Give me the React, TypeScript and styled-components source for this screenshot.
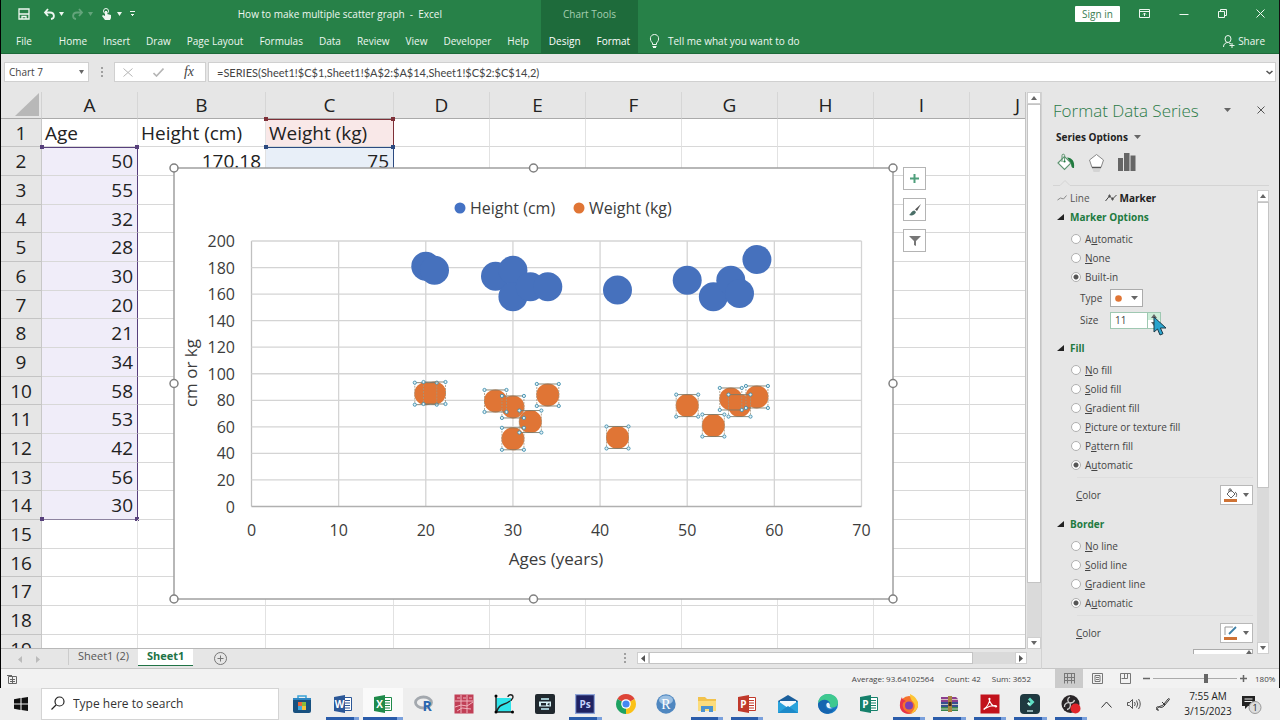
import React, { ReactNode } from "react";
import styled, { createGlobalStyle } from "styled-components";

const ui = `"Open Sans", "Noto Sans", sans-serif`;
const narrow = `Lato, "Open Sans", sans-serif`;
const green = "#278148";

const GlobalStyle = createGlobalStyle`
  * { box-sizing: border-box; }
  html, body { margin: 0; padding: 0; }
  body { font-family: ${ui}; font-size: 10px; color: #444; background: #e6e6e6; overflow: hidden; }
  button, input, select { font: inherit; color: inherit; margin: 0; }
  button { background: none; border: 0; padding: 0; }
  a { color: inherit; text-decoration: none; }
  svg { display: block; flex: none; }
`;

const Screen = styled.div`
  display: flex;
  flex-direction: column;
  height: 100vh;
`;

const AppWindow = styled.div`
  flex: 1;
  min-height: 0;
  display: flex;
  flex-direction: column;
  border-left: 1px solid #000;
  border-right: 1px solid #111;
  background: #e6e6e6;
`;

/* ---------- Title bar and ribbon ---------- */

const Ribbon = styled.header`
  display: grid;
  grid-template-columns: 540px 97px 1fr;
  grid-template-rows: 27px 26px;
  background: ${green};
  color: #eef7f0;
  border-bottom: 1px solid #1d6a39;
`;

const QuickAccess = styled.div`
  display: flex;
  align-items: center;
  padding: 0 99px 0 17px;
`;

const QuickButtons = styled.div`
  display: flex;
  align-items: center;
  gap: 8px;
`;

const IconButton = styled.button<{ $dim?: boolean }>`
  display: flex;
  align-items: center;
  gap: 4px;
  opacity: ${(p) => (p.$dim ? 0.3 : 1)};
`;

const UndoButton = styled(IconButton)`
  margin-left: 5px;
`;

const DocTitle = styled.div`
  margin-left: auto;
  font-size: 10px;
  white-space: pre;
`;

const ContextTitle = styled.div`
  display: flex;
  align-items: center;
  justify-content: center;
  background: #1e6b3b;
  color: #a5cfb2;
  font-size: 10px;
`;

const WindowControls = styled.div`
  display: flex;
  align-items: center;
  justify-content: flex-end;
  gap: 29px;
  padding-right: 14px;
`;

const SignIn = styled.button`
  width: 45px;
  height: 16px;
  margin-right: -10px;
  border-radius: 1px;
  background: #fff;
  color: #3b7d52;
  font-size: 10px;
`;

const Tabs = styled.nav`
  display: flex;
  align-items: center;
  padding: 2px 0 0 15px;
  gap: 16px;
`;

const Tab = styled.button<{ $wide?: boolean }>`
  font-size: 10px;
  white-space: nowrap;
  margin-right: ${(p) => (p.$wide ? "11px" : "0")};
`;

const ContextTabs = styled.nav`
  display: flex;
  align-items: center;
  justify-content: center;
  gap: 16px;
  padding-top: 2px;
  background: #1e6b3b;
  color: #fff;
`;

const RibbonEnd = styled.div`
  display: flex;
  align-items: center;
  justify-content: space-between;
  padding: 2px 14px 0 11px;
`;

const IconLabel = styled.button`
  display: flex;
  align-items: center;
  gap: 8px;
  white-space: nowrap;
`;

const ShareLabel = styled(IconLabel)`
  gap: 3px;
`;

/* ---------- Formula bar ---------- */

const FormulaBar = styled.div`
  display: flex;
  align-items: center;
  height: 38px;
  padding: 0 3px 2px;
`;

const Box = styled.div`
  display: flex;
  align-items: center;
  height: 20px;
  background: #fff;
  border: 1px solid #d0d0d0;
`;

const NameBox = styled(Box)`
  width: 85px;
  padding: 0 4px;
`;

const BareInput = styled.input`
  flex: 1;
  min-width: 0;
  width: 0;
  border: 0;
  outline: 0;
  padding: 0;
  background: transparent;
`;

const FormulaInput = styled(BareInput)`
  font-family: ${narrow};
  font-size: 11px;
`;

const Grip = styled.span<{ $flush?: boolean }>`
  width: 2px;
  height: 11px;
  margin: 0 11px 0 ${(p) => (p.$flush ? "0" : "12px")};
  background: repeating-linear-gradient(#a0a0a0 0 2px, transparent 2px 4px);
`;

const FormulaButtons = styled(Box)`
  width: 92px;
  justify-content: space-between;
  padding: 0 11px 0 8px;
  margin-right: 2px;
`;

const FxLabel = styled.span`
  font: italic 14px "Liberation Serif", serif;
  color: #444;
`;

const FormulaBox = styled(Box)`
  flex: 1;
  padding: 0 2px 0 8px;
`;

/* ---------- Worksheet ---------- */

const Main = styled.main`
  flex: 1;
  min-height: 0;
  display: grid;
  grid-template-columns: 1fr 237px;
`;

const SheetColumn = styled.section`
  display: grid;
  grid-template-columns: 1fr 14px;
  grid-template-rows: 1fr 20px;
  min-height: 0;
  min-width: 0;
  border-right: 1px solid #d2d2d2;
`;

const SheetView = styled.div`
  position: relative;
  overflow: hidden;
  margin-right: 1px;
  border-right: 1px solid #c4c4c4;
  border-bottom: 1px solid #b8b8b8;
  background: #fff;
`;

const Table = styled.table`
  table-layout: fixed;
  width: 1065px;
  border-collapse: separate;
  border-spacing: 0;
  font-size: 19px;
  line-height: 27px;
  color: #222;
`;

const Corner = styled.th`
  position: relative;
  height: 27px;
  padding: 0 2px 2px 14px;
  background: #e6e6e6;
  border-right: 1px solid #d2d2d2;
  border-bottom: 1px solid #aaa;
`;

const ColumnHead = styled.th`
  height: 27px;
  padding: 0;
  font-weight: 400;
  line-height: 24px;
  background: #e6e6e6;
  border-right: 1px solid #d6d6d6;
  border-bottom: 1px solid #aaa;
`;

const Row = styled.tr`
  height: 29px;
  &:nth-child(3n + 1) { height: 28px; }
`;

const RowHead = styled.th`
  padding: 0;
  font-weight: 400;
  line-height: 26px;
  background: #e6e6e6;
  border-right: 1px solid #c8c8c8;
  border-bottom: 1px solid #c4c4c4;
`;

type Mark = "category" | "name" | "value" | undefined;

const cellFill = { category: "#f0edf9", name: "#f9e8e8", value: "#e8eff8" };
const cellEdge = { category: "#57407c", name: "#7e3038", value: "#2c4a80" };

const Cell = styled.td<{ $mark?: Mark; $num?: boolean; $first?: boolean; $last?: boolean }>`
  position: relative;
  padding: 0 4px 0 3px;
  line-height: 26px;
  white-space: nowrap;
  text-align: ${(p) => (p.$num ? "right" : "left")};
  border-right: 1px solid ${(p) => (p.$mark ? cellEdge[p.$mark] : "#e2e2e2")};
  border-bottom: 1px solid ${(p) => (p.$last ? "#8d83a0" : "#d8d8d8")};
  background: ${(p) => (p.$mark ? cellFill[p.$mark] : "transparent")};
  box-shadow: ${(p) => (p.$first && p.$mark ? `inset 0 1px ${cellEdge[p.$mark]}` : "none")};
`;

const Handle = styled.i<{ $color: string; $right?: boolean; $bottom?: boolean }>`
  position: absolute;
  width: 4px;
  height: 4px;
  background: ${(p) => p.$color};
  ${(p) => (p.$right ? "right: -2px;" : "left: -2px;")}
  ${(p) => (p.$bottom ? "bottom: -2px;" : "top: -2px;")}
`;

const ChartFrame = styled.figure`
  position: absolute;
  left: 167px;
  top: 70px;
  margin: 0;
`;

const ChartButtons = styled.div`
  position: absolute;
  left: 902px;
  top: 75px;
  display: grid;
  gap: 8px;
`;

const ChartButton = styled.button`
  display: flex;
  align-items: center;
  justify-content: center;
  width: 23px;
  height: 23px;
  background: #fff;
  border: 1px solid #b4b4b4;
`;

const ScrollBar = styled.div`
  display: flex;
  flex-direction: column;
  align-items: stretch;
  background: #dadada;
`;

const ScrollEnd = styled.button`
  display: flex;
  align-items: center;
  justify-content: center;
  min-width: 12px;
  height: 12px;
  background: #fff;
  border: 1px solid #cfcfcf;
`;

const Thumb = styled.div<{ $share: number }>`
  flex: ${(p) => p.$share};
  background: #fff;
  border: 1px solid #c4c4c4;
`;

const Rest = styled.div<{ $share: number }>`
  flex: ${(p) => p.$share};
`;

const SheetTabs = styled.footer`
  grid-column: 1 / -1;
  display: flex;
  align-items: flex-start;
  border-bottom: 1px solid #c6c6c6;
  font-size: 11px;
`;

const TabArrows = styled.div`
  display: flex;
  gap: 14px;
  width: 68px;
  height: 16px;
  padding: 7px 0 0 17px;
  border-right: 1px solid #cccccc;
`;

const SheetTab = styled.button<{ $active?: boolean }>`
  height: 17px;
  padding: 0 9px 2px;
  line-height: 14px;
  font-weight: ${(p) => (p.$active ? 700 : 400)};
  color: ${(p) => (p.$active ? "#217346" : "#555")};
  background: ${(p) => (p.$active ? "#fff" : "transparent")};
  border-bottom: 1px solid ${(p) => (p.$active ? "#217346" : "transparent")};
`;

const AddSheet = styled.button`
  margin: 3px 0 0 21px;
`;

const HScroll = styled.div`
  display: flex;
  align-items: center;
  width: 417px;
  height: 18px;
  margin-left: auto;
  padding-right: 14px;
`;

const HTrack = styled.div`
  flex: 1;
  display: flex;
  height: 12px;
  background: #dadada;
`;

/* ---------- Format pane ---------- */

const Pane = styled.aside`
  position: relative;
  display: flex;
  flex-direction: column;
  min-height: 0;
  padding: 0 10px 14px 11px;
  border-bottom: 1px solid #c6c6c6;
`;

const PaneTitle = styled.div`
  display: flex;
  align-items: center;
  height: 36px;
`;

const PaneHeading = styled.h2`
  flex: 1;
  margin: 0;
  font-size: 17px;
  font-weight: 300;
  white-space: nowrap;
  color: #2b7a46;
`;

const PaneTools = styled.div`
  display: flex;
  align-items: center;
  gap: 26px;
  padding-right: 4px;
`;

const SeriesOptions = styled.button`
  display: flex;
  align-items: center;
  gap: 6px;
  height: 18px;
  padding-left: 3px;
  font-weight: 700;
  color: #222;
`;

const PaneIcons = styled.div`
  display: flex;
  align-items: center;
  gap: 13px;
  height: 32px;
  padding-left: 4px;
`;

const Divider = styled.div`
  height: 1px;
  background: #d9d9d9;
`;

const PaneBody = styled.div`
  flex: 1;
  min-height: 0;
  display: flex;
  margin-top: 4px;
`;

const PaneScroll = styled.div`
  flex: 1;
  min-width: 0;
  overflow: hidden;
  padding: 0 4px;
`;

const LineTabs = styled.div`
  display: flex;
  align-items: center;
  gap: 15px;
  height: 16px;
  padding-bottom: 1px;
`;

const LineTab = styled.button<{ $active?: boolean }>`
  display: flex;
  align-items: center;
  gap: 3px;
  font-weight: ${(p) => (p.$active ? 700 : 400)};
  color: ${(p) => (p.$active ? "#222" : "#555")};
`;

const SectionHeading = styled.h3`
  display: flex;
  align-items: center;
  gap: 6px;
  height: 21px;
  margin: 0;
  font-size: 10px;
  font-weight: 700;
  color: #217a3f;
`;

const Section = styled.section`
  margin-bottom: 7px;
`;

const RadioRow = styled.label`
  display: flex;
  align-items: center;
  gap: 4px;
  height: 19px;
  padding-left: 14px;
  white-space: nowrap;
  &:first-of-type { margin-top: 2px; }
`;

const Radio = styled.input`
  appearance: none;
  width: 10px;
  height: 10px;
  border: 1px solid #b0b0b0;
  border-radius: 50%;
  background: #fff;
  &:checked { background: radial-gradient(circle, #555 0 2px, #fff 3px); }
`;

const SubRow = styled.div`
  display: flex;
  align-items: center;
  height: 22px;
  padding: 2px 0 0 23px;
  label { width: 30px; }
`;

const TypePicker = styled.button`
  display: flex;
  align-items: center;
  justify-content: space-between;
  width: 33px;
  height: 18px;
  padding: 0 4px;
  background: #fff;
  border: 1px solid #ababab;
`;

const Spinner = styled.div`
  display: flex;
  width: 51px;
  height: 17px;
  padding-left: 4px;
  background: #fff;
  border: 1px solid #9fc8b2;
`;

const SpinButtons = styled.div`
  display: grid;
  width: 13px;
  border-left: 1px solid #9fc8b2;
`;

const SpinButton = styled.button<{ $hot?: boolean }>`
  display: flex;
  align-items: center;
  justify-content: center;
  background: ${(p) => (p.$hot ? "#cdeed9" : "#fff")};
`;

const ColorRow = styled.div`
  display: flex;
  align-items: center;
  justify-content: space-between;
  height: 22px;
  margin-top: 6px;
  padding-left: 19px;
`;

const ColorButton = styled.button`
  display: flex;
  align-items: center;
  justify-content: center;
  gap: 5px;
  width: 33px;
  height: 20px;
  background: #fff;
  border: 1px solid #b8b8b8;
`;

const RowRule = styled(Divider)`
  margin: 3px 0 0 20px;
  background: #dedede;
`;

const TransparencyRow = styled(ColorRow)`
  margin-top: 4px;
  height: 19px;
`;

const PercentBox = styled(Spinner)`
  width: 60px;
  border-color: #ababab;
  justify-content: space-between;
`;

const Cursor = styled.svg`
  position: absolute;
  left: 111px;
  top: 224px;
`;

/* ---------- Status bar ---------- */

const StatusBar = styled.div`
  display: flex;
  align-items: center;
  height: 19px;
  padding: 0 4px 0 6px;
  background: #f2f2f2;
  font-size: 8px;
`;

const Stats = styled.div`
  display: flex;
  gap: 11px;
  margin: 0 24px 0 auto;
`;

const ViewButton = styled.button<{ $active?: boolean }>`
  display: flex;
  align-items: center;
  justify-content: center;
  width: 28px;
  height: 19px;
  background: ${(p) => (p.$active ? "#cbcbcb" : "transparent")};
`;

const Zoom = styled.div`
  display: flex;
  align-items: center;
  gap: 3px;
  margin-left: 4px;
`;

const ZoomRange = styled.input`
  appearance: none;
  width: 84px;
  height: 10px;
  background: linear-gradient(#aaa, #aaa) center / 100% 1px no-repeat;
  &::-webkit-slider-thumb {
    appearance: none;
    width: 4px;
    height: 9px;
    background: #666;
  }
`;

const ZoomValue = styled.span`
  width: 20px;
  margin-left: 5px;
`;

/* ---------- Taskbar ---------- */

const Taskbar = styled.footer`
  display: flex;
  align-items: stretch;
  height: 32px;
  background: #eeeeee;
  color: #222;
`;

const Start = styled.button`
  display: flex;
  align-items: center;
  justify-content: center;
  width: 41px;
`;

const Search = styled.label`
  display: flex;
  align-items: center;
  gap: 8px;
  width: 238px;
  padding: 0 0 2px 9px;
  background: #fff;
  border: 1px solid #d4d4d4;
  font-size: 12px;
  input::placeholder { color: #333; opacity: 1; }
`;

const Apps = styled.div`
  flex: 1;
  display: grid;
  grid-template-columns: repeat(20, 1fr);
  margin: 0 10px 0 3px;
`;

const AppButton = styled.button<{ $open?: boolean; $active?: boolean }>`
  position: relative;
  display: flex;
  align-items: center;
  justify-content: center;
  background: ${(p) => (p.$active ? "#fafafa" : "transparent")};
  &::after {
    content: "";
    display: ${(p) => (p.$open ? "block" : "none")};
    position: absolute;
    left: ${(p) => (p.$active ? "0" : "4px")};
    right: ${(p) => (p.$active ? "0" : "4px")};
    bottom: 0;
    height: 3px;
    background: linear-gradient(90deg, #2a5caa 84%, #7aa0dc 84%);
  }
`;

const Tray = styled.div`
  display: flex;
  align-items: center;
  gap: 15px;
  padding-right: 18px;
`;

const Clock = styled.time`
  width: 54px;
  margin: 0 -8px 0 -4px;
  font-size: 10px;
  line-height: 15px;
  text-align: center;
  white-space: nowrap;
`;

/* ---------- Small icons ---------- */

const Caret = ({ up, color = "#666", size = 7 }: { up?: boolean; color?: string; size?: number }) => (
  <svg width={size} height="4" viewBox="0 0 8 4" preserveAspectRatio="none">
    <path d={up ? "M0 4 4 0 8 4z" : "M0 0h8L4 4z"} fill={color} />
  </svg>
);

const SideCaret = ({ left, color = "#555" }: { left?: boolean; color?: string }) => (
  <svg width="4" height="7" viewBox="0 0 4 7">
    <path d={left ? "M4 0v7L0 3.500z" : "M0 0v7l4-3.500z"} fill={color} />
  </svg>
);

const Stroke = ({ w, h, d, color = "#eef7f0", sw = 1 }: { w: number; h: number; d: string; color?: string; sw?: number }) => (
  <svg width={w} height={h} viewBox={`0 0 ${w} ${h}`} fill="none" stroke={color} strokeWidth={sw}>
    <path d={d} />
  </svg>
);

const BucketIcon = () => (
  <svg width="18" height="19" viewBox="0 0 18 19">
    <path d="M1 10 7.500 3.500 14 10l-6.500 6.500z" fill="#fff" stroke="#5d9470" strokeWidth="1.100" />
    <path d="M5 9V2.500a1.300 1.300 0 0 1 2.600 0V8" fill="none" stroke="#5d9470" />
    <path d="M10 4.500c5 .5 8 3.500 7 10.500-2 .500-3-1.500-3-5z" fill="#217a3f" />
    <circle cx="7.500" cy="8.500" r="1.100" fill="#217a3f" />
  </svg>
);

const PentagonIcon = () => (
  <svg width="17" height="19" viewBox="0 0 17 19">
    <path d="M8.500 1.500 15.500 7 13 14.500H4L1.500 7z" fill="#fff" stroke="#888" />
    <path d="M4 14.500h9" stroke="#555" strokeWidth="1.500" />
    <path d="M4.500 16h8l-1 3h-6z" fill="#d4d4d4" />
  </svg>
);

const ColumnsIcon = () => (
  <svg width="18" height="18" viewBox="0 0 18 18" fill="#666">
    <path d="M0 5h5v13H0zM6 0h5.500v18H6zM12.500 2.500h5V18h-5z" />
  </svg>
);

/* ---------- Chart ---------- */

const heights: [number, number][] = [
  [20, 181], [21, 178], [28, 173.5], [30, 178], [30, 158], [32, 165.5], [34, 165.5],
  [42, 163], [50, 170.5], [53, 158], [55, 170.5], [56, 160.5], [58, 186],
];
const weights: [number, number][] = [
  [20, 85], [21, 85.5], [28, 79.5], [30, 75], [30, 51], [32, 64], [34, 84],
  [42, 52], [50, 76], [53, 61], [55, 81], [56, 76], [58, 82.5],
];

const plot = { left: 83.5, top: 79, width: 610, height: 265.500 };
const px = (v: number) => plot.left + (v / 70) * plot.width;
const py = (v: number) => plot.top + plot.height - (v / 200) * plot.height;
const xTicks = [0, 10, 20, 30, 40, 50, 60, 70];
const yTicks = [0, 20, 40, 60, 80, 100, 120, 140, 160, 180, 200];

const ScatterChart = () => (
  <svg width="732" height="444" viewBox="0 0 732 444" fontFamily='"Open Sans", sans-serif' fontSize="16" fill="#3c3c3c">
    <rect x="6" y="6" width="719" height="431" fill="#fff" stroke="#a0a0a0" strokeWidth="1.500" />
    {xTicks.map((t) => (
      <g key={t}>
        <path d={`M${px(t)} ${plot.top}V${plot.top + plot.height}`} stroke={t ? "#d4d4d4" : "#c0c0c0"} strokeWidth="1.300" />
        <text x={px(t)} y="374" textAnchor="middle">{t}</text>
      </g>
    ))}
    {yTicks.map((t) => (
      <g key={t}>
        <path d={`M${plot.left} ${py(t)}H${plot.left + plot.width}`} stroke={t ? "#d4d4d4" : "#b0b0b0"} strokeWidth="1.300" />
        <text x="67" y={py(t) + 6} textAnchor="end">{t}</text>
      </g>
    ))}
    <circle cx="292" cy="46" r="5.500" fill="#4472c4" />
    <text x="302" y="52">Height (cm)</text>
    <circle cx="411" cy="46" r="5.500" fill="#e07535" />
    <text x="421" y="52">Weight (kg)</text>
    <text x="388" y="403" textAnchor="middle" fontSize="17">Ages (years)</text>
    <text transform="translate(29 211) rotate(-90)" textAnchor="middle" fontSize="17">cm or kg</text>
    {heights.map(([x, y], i) => (
      <circle key={i} cx={px(x)} cy={py(y)} r="14.500" fill="#4671bd" />
    ))}
    {weights.map(([x, y], i) => (
      <circle key={i} cx={px(x)} cy={py(y)} r="11.500" fill="#e07535" />
    ))}
    {weights.map(([x, y], i) => (
      <g key={i} transform={`translate(${px(x)} ${py(y)})`} fill="#e4f2f8" stroke="#3f8fae" strokeWidth="0.900">
        <path d="M-11-11H11M-11 11H11" stroke="#7d7a6a" strokeWidth="0.900" />
        <path d="M-11-11V11M11-11V11" stroke="#a3947c" strokeWidth="0.800" strokeDasharray="2 1" />
        <circle cx="-11" cy="-11" r="1.600" />
        <circle cx="11" cy="-11" r="1.600" />
        <circle cx="-11" cy="11" r="1.600" />
        <circle cx="11" cy="11" r="1.600" />
      </g>
    ))}
    {[6, 365.5, 725].flatMap((x) =>
      [6, 221.5, 437].filter((y) => !(x === 365.5 && y === 221.5)).map((y) => (
        <circle key={`${x}-${y}`} cx={x} cy={y} r="4" fill="#fff" stroke="#808080" strokeWidth="1.500" />
      ))
    )}
  </svg>
);

/* ---------- Worksheet data ---------- */

const columns = ["A", "B", "C", "D", "E", "F", "G", "H", "I", "J"];
const colWidths = [96, 128, 128, 96, 96, 96, 96, 96, 96, 96];
const ages = [50, 55, 32, 28, 30, 20, 21, 34, 58, 53, 42, 56, 30];

const cellText = (row: number, col: number): string => {
  if (row === 1) return ["Age", "Height (cm)", "Weight (kg)"][col] ?? "";
  if (col === 0) return String(ages[row - 2] ?? "");
  if (row === 2) return ["", "170.18", "75"][col] ?? "";
  return "";
};

const cellMark = (row: number, col: number): Mark => {
  if (col === 0 && row > 1 && row < 15) return "category";
  if (col === 2 && row === 1) return "name";
  if (col === 2 && row > 1 && row < 15) return "value";
  return undefined;
};

const Worksheet = () => (
  <Table>
    <colgroup>
      <col style={{ width: 41 }} />
      {colWidths.map((w, i) => <col key={i} style={{ width: w }} />)}
    </colgroup>
    <thead>
      <tr>
        <Corner>
          <svg width="24" height="23" viewBox="0 0 24 23"><path d="M24 0v23H0z" fill="#b8b8b8" /></svg>
        </Corner>
        {columns.map((c) => <ColumnHead key={c} scope="col">{c}</ColumnHead>)}
      </tr>
    </thead>
    <tbody>
      {Array.from({ length: 19 }, (_, i) => i + 1).map((r) => (
        <Row key={r}>
          <RowHead scope="row">{r}</RowHead>
          {columns.map((c, i) => {
            const mark = cellMark(r, i);
            return (
              <Cell key={c} $mark={mark} $num={r > 1} $first={r <= 2} $last={r === 14 && i === 0}>
                {cellText(r, i)}
                {mark && r <= 2 && (
                  <>
                    <Handle $color={cellEdge[mark]} />
                    <Handle $color={cellEdge[mark]} $right />
                  </>
                )}
                {mark === "category" && r === 14 && (
                  <>
                    <Handle $color={cellEdge[mark]} $bottom />
                    <Handle $color={cellEdge[mark]} $bottom $right />
                  </>
                )}
              </Cell>
            );
          })}
        </Row>
      ))}
    </tbody>
  </Table>
);

/* ---------- Taskbar icons ---------- */

const Glyph = ({ children }: { children: ReactNode }) => (
  <svg width="20" height="20" viewBox="0 0 20 20">{children}</svg>
);

const Letter = ({ x = 6, y = 14, size = 10, color = "#fff", children }: { x?: number; y?: number; size?: number; color?: string; children: string }) => (
  <text x={x} y={y} fontSize={size} fontWeight="700" fill={color} textAnchor="middle" fontFamily='"Open Sans", sans-serif'>{children}</text>
);

const OfficeGlyph = ({ letter, color }: { letter: string; color: string }) => (
  <Glyph>
    <path d="M10 3.500h8.500v13H10z" fill="#fff" stroke={color} />
    <path d="M12 6.500h5M12 9h5M12 11.500h5M12 14h5" stroke={color} strokeWidth="1.200" />
    <path d="M1 3l11-2v18L1 17z" fill={color} />
    <Letter x={6.5} y={13.5}>{letter}</Letter>
  </Glyph>
);

const apps: { name: string; open?: boolean; active?: boolean; icon: ReactNode }[] = [
  {
    name: "Store",
    icon: (
      <Glyph>
        <path d="M6 4V2h8v2" fill="none" stroke="#38a3d8" strokeWidth="1.500" />
        <path d="M1 4h18v13a2 2 0 0 1-2 2H3a2 2 0 0 1-2-2z" fill="#17507f" />
        <path d="M1 4h18v2H1z" fill="#2d86c2" />
        <path d="M6 8h4v4H6z" fill="#e8653a" /><path d="M10 8h4v4h-4z" fill="#86bc3c" />
        <path d="M6 12h4v4H6z" fill="#3ca8e0" /><path d="M10 12h4v4h-4z" fill="#f3c13a" />
      </Glyph>
    ),
  },
  { name: "Word", open: true, icon: <OfficeGlyph letter="W" color="#2b5797" /> },
  { name: "Excel", open: true, active: true, icon: <OfficeGlyph letter="X" color="#1f8a4a" /> },
  {
    name: "R",
    icon: (
      <Glyph>
        <ellipse cx="9.500" cy="8.500" rx="8" ry="5.500" fill="none" stroke="#a3a8ae" strokeWidth="2.800" />
        <Letter x={13} y={17} size={14} color="#2a66b0">R</Letter>
      </Glyph>
    ),
  },
  {
    name: "Charts",
    icon: (
      <Glyph>
        <rect width="19" height="19" x=".500" y=".500" fill="#c13f56" />
        <path d="M1 7h18M7 1v18M13 1v18M1 13l6-2 6 1 6-4M3 4h3M9 4h3M15 4h3M3 17l5-3 9 1" stroke="#efb3bd" fill="none" />
      </Glyph>
    ),
  },
  {
    name: "Curve",
    icon: (
      <Glyph>
        <path d="M2 4h15v14H2z" fill="#2fe3ea" />
        <path d="M2 1v17h17M3 17C6 9 9 12 16 7" fill="none" stroke="#222" strokeWidth="1.400" />
        <path d="M14 3c0-3 5-3 5 0 0 2-2 2-2 4" fill="none" stroke="#222" strokeWidth="1.400" />
        <circle cx="2" cy="18" r="1.500" /><circle cx="18.500" cy="18" r="1.500" /><circle cx="2" cy="2" r="1.500" />
      </Glyph>
    ),
  },
  {
    name: "Recorder",
    icon: (
      <Glyph>
        <rect width="20" height="20" rx="2" fill="#20282e" />
        <path d="M6 4h8v2H6zM6 14h8v2H6z" fill="#9fc3cb" />
        <path d="M4 7.500h12v5H4z" fill="#d6f0f5" />
        <path d="M6 9h5v2.500H6zM12 10.300l2.500-1.500v3z" fill="#20282e" />
      </Glyph>
    ),
  },
  {
    name: "Photoshop",
    open: true,
    icon: (
      <Glyph>
        <rect x=".500" y=".500" width="19" height="19" fill="#1e2262" stroke="#8fa5d8" strokeWidth="1.500" />
        <Letter x={10} y={13.5} size={10} color="#c5d4fb">Ps</Letter>
      </Glyph>
    ),
  },
  {
    name: "Chrome",
    icon: (
      <Glyph>
        <path d="M10 10 1.340 5A10 10 0 0 1 18.660 5z" fill="#dd4437" />
        <path d="M10 10 18.660 5A10 10 0 0 1 10 20z" fill="#fbc116" />
        <path d="M10 10 10 20A10 10 0 0 1 1.340 5z" fill="#1da261" />
        <circle cx="10" cy="10" r="4.800" fill="#fff" /><circle cx="10" cy="10" r="3.600" fill="#4587f2" />
      </Glyph>
    ),
  },
  {
    name: "RStudio",
    icon: (
      <Glyph>
        <circle cx="10" cy="10" r="9.700" fill="#4f87c0" />
        <ellipse cx="10" cy="6" rx="7" ry="4.500" fill="#9cc0e2" />
        <text x="10" y="15" fontSize="14" fill="#fff" textAnchor="middle" fontFamily='"Liberation Serif", serif'>R</text>
      </Glyph>
    ),
  },
  {
    name: "Explorer",
    open: true,
    icon: (
      <Glyph>
        <path d="M1 3h7l2 2h9v12H1z" fill="#f2c24c" /><path d="M1 7h18v10H1z" fill="#fbdc7c" />
        <path d="M4 18v-6h12v6h-4v-3H8v3z" fill="#4b93cf" />
      </Glyph>
    ),
  },
  { name: "PowerPoint", open: true, icon: <OfficeGlyph letter="P" color="#c0392b" /> },
  {
    name: "Mail",
    icon: (
      <Glyph>
        <path d="M0 7 10 1l10 6v12H0z" fill="#1b5f9c" /><path d="M2 7h16v6H2z" fill="#f4f9fc" />
        <path d="M0 7l10 7 10-7v12H0z" fill="#2aa3dc" /><path d="M0 19 10 12l10 7z" fill="#1c8ac9" />
      </Glyph>
    ),
  },
  {
    name: "Edge",
    icon: (
      <Glyph>
        <circle cx="10" cy="10" r="10" fill="#1877c4" />
        <path d="M0 9C1 2 6 0 10 0c6 0 10 4 10 8.500 0 3-2.500 5-5.500 5-2.500 0-3.500-1-2.500-2.500C13 8 10 6 7 6.500 3 7 1 8 0 9z" fill="#3fc98f" />
        <path d="M0 10C2 5 10 4 11 9c-2-1-4 1-3.500 3.500C8 16 12 17 16 15c-2 4-6 5-9 4.600C3 18.500 0 15 0 10z" fill="#1565b0" />
        <path d="M11 9c-2-1-3 1-2.500 3 .500 2 3 3 6.500 2-3 0-4-1.500-3-3z" fill="#eaf5fb" />
      </Glyph>
    ),
  },
  { name: "Publisher", icon: <OfficeGlyph letter="P" color="#15806b" /> },
  {
    name: "Firefox",
    open: true,
    icon: (
      <Glyph>
        <circle cx="10" cy="11" r="9" fill="#f5722c" />
        <path d="M11 0c5 2 9 7 8 12-1 4-4 7-8 8 5-4 6-9 3-12C12 6 11 4 11 0z" fill="#fdc534" />
        <path d="M3 3c0 3 3 3 4 4-3 1-4 3-3 6 1 4 5 6 9 6-8 3-13-3-12-9 0-3 1-5 2-7z" fill="#e8334a" />
        <circle cx="10" cy="11.500" r="4" fill="#7b3fb5" />
      </Glyph>
    ),
  },
  {
    name: "WinRAR",
    open: true,
    icon: (
      <Glyph>
        <path d="M2 3h15l2 2v3H2z" fill="#8d3f8e" /><path d="M2 8h17v5H2z" fill="#38508e" /><path d="M2 13h17v4H2z" fill="#37864c" />
        <path d="M2 5.500h17M2 10.500h17M2 15h17" stroke="#e8e0d0" strokeWidth=".800" />
        <path d="M9 2h4v16H9z" fill="#a8843f" /><path d="M9.500 8h3v4h-3z" fill="#3e2e1a" />
      </Glyph>
    ),
  },
  {
    name: "Acrobat",
    open: true,
    icon: (
      <Glyph>
        <rect width="19" height="19" x=".500" y=".500" fill="#c2121c" />
        <path d="M4 15c3-2 5-5 6-10 0-1-1.500-1-1 0 1 4 3 7 7 8 1 0 1-1.500-1-1.500-4 0-7 1-10 3-1 1-1 1-1 .500z" fill="none" stroke="#fff" strokeWidth="1.100" />
      </Glyph>
    ),
  },
  {
    name: "Filmora",
    open: true,
    icon: (
      <Glyph>
        <rect width="20" height="20" rx="4" fill="#1f3940" />
        <path d="M10 3.500 14.500 8 10 12.500 8 10.500 10.500 8 8 5.500z" fill="#5fe0c4" />
        <path d="M7 9.500 8.500 8l2 2-1.500 1.500z" fill="#c9fff2" />
        <path d="M7 17h6" stroke="#dff" strokeWidth="1.200" />
      </Glyph>
    ),
  },
  {
    name: "OBS",
    open: true,
    icon: (
      <Glyph>
        <circle cx="9.500" cy="10" r="9" fill="#2a2628" />
        <path d="M9 3c-3 1-3 5 0 6 2 0 4-1 4.500-3M9 9c-3-1-6 1-5.500 4M9 9c1 3 0 6-3 6.500" fill="none" stroke="#cfcfcf" strokeWidth="1.300" />
        <circle cx="14.500" cy="14.500" r="5" fill="#e0252b" />
      </Glyph>
    ),
  },
];

/* ---------- Pane parts ---------- */

const fillOptions = [["", "N", "o fill"], ["", "S", "olid fill"], ["", "G", "radient fill"], ["", "P", "icture or texture fill"], ["P", "a", "ttern fill"], ["A", "u", "tomatic"]];
const borderOptions = [["", "N", "o line"], ["", "S", "olid line"], ["", "G", "radient line"], ["A", "u", "tomatic"]];
const markerOptions = [["A", "u", "tomatic"], ["", "N", "one"], ["Built-in", "", ""]];

const Radios = ({ name, options, chosen }: { name: string; options: string[][]; chosen: number }) => (
  <>
    {options.map(([a, u, b], i) => (
      <RadioRow key={i}>
        <Radio type="radio" name={name} defaultChecked={i === chosen} />
        <span>{a}{u && <u>{u}</u>}{b}</span>
      </RadioRow>
    ))}
  </>
);

const Heading = ({ children }: { children: string }) => (
  <SectionHeading>
    <svg width="7" height="6" viewBox="0 0 7 6"><path d="M7 0v6H0z" fill="#222" /></svg>
    {children}
  </SectionHeading>
);

const FormatPane = () => (
  <Pane>
    <PaneTitle>
      <PaneHeading>Format Data Series</PaneHeading>
      <PaneTools>
        <IconButton aria-label="Pane menu"><Caret /></IconButton>
        <IconButton aria-label="Close pane"><Stroke w={8} h={8} d="M.5 .5l7 7M7.500 .5l-7 7" color="#555" /></IconButton>
      </PaneTools>
    </PaneTitle>
    <SeriesOptions>Series Options <Caret /></SeriesOptions>
    <PaneIcons>
      <IconButton aria-label="Fill and line"><BucketIcon /></IconButton>
      <IconButton aria-label="Effects"><PentagonIcon /></IconButton>
      <IconButton aria-label="Series options"><ColumnsIcon /></IconButton>
    </PaneIcons>
    <svg width="100%" height="8"><path d="M0 7.500h7l5-5 5 5h210" fill="none" stroke="#d4d4d4" /></svg>
    <PaneBody>
      <PaneScroll>
        <LineTabs>
          <LineTab><Stroke w={10} h={8} d="M.5 6l3-2 3 1 3-3.500" color="#888" />Line</LineTab>
          <LineTab $active><Stroke w={12} h={8} d="M.5 7l4-5 3 3 4-4M4 1h1v2H4zM7 4h1v2H7z" color="#444" />Marker</LineTab>
        </LineTabs>
        <Section>
          <Heading>Marker Options</Heading>
          <Radios name="marker" options={markerOptions} chosen={2} />
          <SubRow>
            <label htmlFor="type">Type</label>
            <TypePicker id="type">
              <svg width="7" height="7"><circle cx="3.500" cy="3.500" r="3.300" fill="#e07535" /></svg>
              <Caret />
            </TypePicker>
          </SubRow>
          <SubRow>
            <label htmlFor="size">Size</label>
            <Spinner>
              <BareInput id="size" defaultValue="11" />
              <SpinButtons>
                <SpinButton $hot aria-label="Increase"><Caret up size={6} /></SpinButton>
                <SpinButton aria-label="Decrease"><Caret size={6} /></SpinButton>
              </SpinButtons>
            </Spinner>
          </SubRow>
        </Section>
        <Section>
          <Heading>Fill</Heading>
          <Radios name="fill" options={fillOptions} chosen={5} />
          <RowRule />
          <ColorRow>
            <span><u>C</u>olor</span>
            <ColorButton aria-label="Fill color">
              <svg width="14" height="14" viewBox="0 0 14 14">
                <path d="M3 6 7 2l4 4-4 4z" fill="#fff" stroke="#666" /><path d="M5 4V1h2v3M11 4c2 1 2 3 1 5" fill="none" stroke="#666" />
                <path d="M0 11h13v3H0z" fill="#cf7335" />
              </svg>
              <Caret size={6} />
            </ColorButton>
          </ColorRow>
        </Section>
        <Section>
          <Heading>Border</Heading>
          <Radios name="border" options={borderOptions} chosen={3} />
          <RowRule />
          <ColorRow>
            <span><u>C</u>olor</span>
            <ColorButton aria-label="Border color">
              <svg width="14" height="14" viewBox="0 0 14 14">
                <path d="M1 9V1h8" fill="none" stroke="#999" /><path d="M5 8 12 1" stroke="#3d7fa6" strokeWidth="1.800" />
                <path d="M0 11h13v3H0z" fill="#cf7335" />
              </svg>
              <Caret size={6} />
            </ColorButton>
          </ColorRow>
          <TransparencyRow>
            <label htmlFor="alpha">Transparency</label>
            <PercentBox>
              <BareInput id="alpha" defaultValue="0%" />
              <Caret up size={6} />
            </PercentBox>
          </TransparencyRow>
        </Section>
      </PaneScroll>
      <ScrollBar>
        <ScrollEnd aria-label="Scroll up"><Caret up size={6} /></ScrollEnd>
        <Thumb $share={285} />
        <Rest $share={154} />
        <ScrollEnd aria-label="Scroll down"><Caret size={6} /></ScrollEnd>
      </ScrollBar>
    </PaneBody>
    <Cursor width="14" height="20" viewBox="0 0 14 20">
      <path d="M1 1v15l3.500-3 2.500 6 3-1.300-2.600-5.700H13z" fill="#2ba5cf" stroke="#1c3a48" />
    </Cursor>
  </Pane>
);

/* ---------- Page ---------- */

const tabs = ["File", "Home", "Insert", "Draw", "Page Layout", "Formulas", "Data", "Review", "View", "Developer", "Help"];

export default function App() {
  return (
    <Screen>
      <GlobalStyle />
      <AppWindow>
        <Ribbon>
          <QuickAccess>
            <QuickButtons>
              <IconButton aria-label="Save">
                <svg width="12" height="12" viewBox="0 0 12 12" fill="none" stroke="#eef7f0" strokeWidth="1.300"><path d="M1 1h10v10H1zM1 6h10M4 11V8.500h4V11" /></svg>
              </IconButton>
              <UndoButton aria-label="Undo">
                <Stroke w={12} h={12} d="M5 1 2 4.500 5 8M2 4.500h5c5 0 5 6 1 6.500" sw={1.8} /><Caret color="#eef7f0" size={5} />
              </UndoButton>
              <IconButton aria-label="Redo" $dim>
                <Stroke w={12} h={12} d="M7 1l3 3.500L7 8M10 4.500H5C0 4.500 0 10.500 4 11" sw={1.8} /><Caret color="#eef7f0" size={5} />
              </IconButton>
              <IconButton aria-label="Touch mode">
                <svg width="12" height="12" viewBox="0 0 12 12" fill="#eef7f0"><path d="M4 3h2v3l4 1v3l-1 2H4L1 8l1-1 2 1z" /><circle cx="5" cy="3" r="2.500" fill="none" stroke="#eef7f0" /></svg>
                <Caret color="#eef7f0" size={5} />
              </IconButton>
              <IconButton aria-label="Customize"><Stroke w={5} h={6} d="M0 .5h5M1 3.500h3M2 4.500h1" /></IconButton>
            </QuickButtons>
            <DocTitle>How to make multiple scatter graph  -  Excel</DocTitle>
          </QuickAccess>
          <ContextTitle>Chart Tools</ContextTitle>
          <WindowControls>
            <SignIn>Sign in</SignIn>
            <IconButton aria-label="Ribbon display"><Stroke w={11} h={9} d="M.5 .5h10v8H.5zM.5 2.500h10M5.500 7V4M4 5.500l1.500-1.500L7 5.500" /></IconButton>
            <IconButton aria-label="Minimize"><Stroke w={10} h={8} d="M.5 4.500h9" /></IconButton>
            <IconButton aria-label="Restore"><Stroke w={9} h={9} d="M.5 2.500h6v6h-6zM2.500 2V.5h6v6H7" /></IconButton>
            <IconButton aria-label="Close"><Stroke w={9} h={9} d="M.5 .5l8 8M8.500 .5l-8 8" /></IconButton>
          </WindowControls>
          <Tabs>
            {tabs.map((t) => <Tab key={t} $wide={t === "File"}>{t}</Tab>)}
          </Tabs>
          <ContextTabs>
            <Tab>Design</Tab>
            <Tab>Format</Tab>
          </ContextTabs>
          <RibbonEnd>
            <IconLabel>
              <Stroke w={11} h={14} d="M3.500 10.500V9C0 6 1 .5 5.500 .5S11 6 7.500 9v1.500zM3.500 12.500h4M4 13.500h3" />
              Tell me what you want to do
            </IconLabel>
            <ShareLabel>
              <Stroke w={12} h={13} d="M8 4a3 3.500 0 1 1-6 0 3 3.500 0 1 1 6 0M.5 12c0-3 2-4.500 4.500-4.500M6 8l2 1M6.500 10.500h5M9 8v5" />
              Share
            </ShareLabel>
          </RibbonEnd>
        </Ribbon>

        <FormulaBar>
          <NameBox>
            <BareInput aria-label="Name box" defaultValue="Chart 7" />
            <Caret size={5} />
          </NameBox>
          <Grip />
          <FormulaButtons>
            <IconButton aria-label="Cancel"><Stroke w={10} h={9} d="M.5 .5l9 8M9.500 .5l-9 8" color="#b5b5b5" /></IconButton>
            <IconButton aria-label="Enter"><Stroke w={11} h={9} d="M.5 5l3 3 7-7.500" color="#b5b5b5" sw={1.6} /></IconButton>
            <IconButton aria-label="Insert function"><FxLabel>fx</FxLabel></IconButton>
          </FormulaButtons>
          <FormulaBox>
            <FormulaInput aria-label="Formula" defaultValue="=SERIES(Sheet1!$C$1,Sheet1!$A$2:$A$14,Sheet1!$C$2:$C$14,2)" />
            <Stroke w={7} h={5} d="M.5 1l3 2.500L6.500 1" color="#555" sw={1.6} />
          </FormulaBox>
        </FormulaBar>

        <Main>
          <SheetColumn>
            <SheetView>
              <Worksheet />
              <ChartFrame><ScatterChart /></ChartFrame>
              <ChartButtons>
                <ChartButton aria-label="Chart elements"><Stroke w={9} h={9} d="M4.500 0v9M0 4.500h9" color="#4f9f7c" sw={2} /></ChartButton>
                <ChartButton aria-label="Chart styles">
                  <svg width="12" height="12" viewBox="0 0 12 12"><path d="M12 0 8 7 6 5.500z" fill="#555" /><path d="M5.500 6.500 7 8c-1 3-4 4-7 3 2-1 2-4 5.500-4.500z" fill="#4a6f68" /></svg>
                </ChartButton>
                <ChartButton aria-label="Chart filters">
                  <svg width="12" height="12" viewBox="0 0 12 12"><path d="M0 1h12L7 6v5l-2-1V6z" fill="#777" /></svg>
                </ChartButton>
              </ChartButtons>
            </SheetView>
            <ScrollBar>
              <ScrollEnd aria-label="Scroll up"><Caret up size={6} /></ScrollEnd>
              <Thumb $share={479} />
              <Rest $share={54} />
              <ScrollEnd aria-label="Scroll down"><Caret size={6} /></ScrollEnd>
            </ScrollBar>
            <SheetTabs>
              <TabArrows><SideCaret left color="#bbb" /><SideCaret color="#bbb" /></TabArrows>
              <SheetTab>Sheet1 (2)</SheetTab>
              <SheetTab $active>Sheet1</SheetTab>
              <AddSheet aria-label="New sheet">
                <Stroke w={13} h={13} d="M12.500 6.500a6 6 0 1 1-12 0 6 6 0 1 1 12 0M6.500 3.500v6M3.500 6.500h6" color="#777" />
              </AddSheet>
              <HScroll>
                <Grip $flush />
                <HTrack>
                  <ScrollEnd aria-label="Scroll left"><SideCaret left /></ScrollEnd>
                  <Thumb $share={324} />
                  <Rest $share={42} />
                  <ScrollEnd aria-label="Scroll right"><SideCaret /></ScrollEnd>
                </HTrack>
              </HScroll>
            </SheetTabs>
          </SheetColumn>
          <FormatPane />
        </Main>

        <StatusBar>
          <Stroke w={10} h={10} d="M1.500 2.500h8v7h-8zM0 1.500h5M3 5.500h5M3 7.500h5M5.500 3v6" color="#666" />
          <Stats><span>Average: 93.64102564</span><span>Count: 42</span><span>Sum: 3652</span></Stats>
          <ViewButton $active aria-label="Normal view"><Stroke w={11} h={11} d="M.5 .5v10M3.500 .5v10M7.500 .5v10M10.500 .5v10M0 .5h11M0 4.500h11M0 7.500h11" color="#777" /></ViewButton>
          <ViewButton aria-label="Page layout"><Stroke w={11} h={11} d="M.5 .5h10v10H.5zM3 2.500h5v6H3zM4 4.500h3M4 6.500h3" color="#777" /></ViewButton>
          <ViewButton aria-label="Page break preview"><Stroke w={11} h={11} d="M.5 .5h10v10H.5zM4.500 .5v5M7.500 .5v5h-6" color="#777" /></ViewButton>
          <Zoom>
            <Stroke w={7} h={7} d="M0 3.500h7" color="#666" sw={1.5} />
            <ZoomRange type="range" aria-label="Zoom" min={0} max={100} defaultValue={64} />
            <Stroke w={7} h={7} d="M0 3.500h7M3.500 0v7" color="#666" sw={1.5} />
            <ZoomValue>180%</ZoomValue>
          </Zoom>
        </StatusBar>
      </AppWindow>

      <Taskbar>
        <Start aria-label="Start">
          <svg width="14" height="14" viewBox="0 0 13 13" fill="#111"><path d="M0 2l6-1v5H0zM7 1l6-1v6H7zM0 7h6v5l-6-1zM7 7h6v6l-6-1z" /></svg>
        </Start>
        <Search>
          <Stroke w={14} h={14} d="M13 5.500a4.500 4.500 0 1 1-9 0 4.500 4.500 0 1 1 9 0M5 9 .5 13.500" color="#222" sw={1.2} />
          <BareInput aria-label="Search" placeholder="Type here to search" />
        </Search>
        <Apps>
          {apps.map((a) => (
            <AppButton key={a.name} aria-label={a.name} $open={a.open} $active={a.active}>{a.icon}</AppButton>
          ))}
        </Apps>
        <Tray>
          <Stroke w={11} h={7} d="M.5 6.500l5-5.500 5 5.500" color="#333" />
          <Stroke w={14} h={12} d="M.5 4.500h2l3-3v9l-3-3h-2zM7.500 4q1.500 2 0 4M9.500 2.500q2.500 3.500 0 7M11.500 1q3.500 5 0 10" color="#555" />
          <Stroke w={14} h={14} d="M1 13c1-5 5-3 7-6l4-5c1-1 2 0 1 1L8 9C5 12 3 9 1 10s0 4 2 3M6 5l3 3" color="#333" />
          <Clock>7:55 AM<br />3/15/2023</Clock>
          <svg width="20" height="19" viewBox="0 0 20 19">
            <path d="M0 1h13v10H6l-3 3v-3H0z" fill="#222" /><path d="M2.500 4h8M2.500 6.500h8" stroke="#eee" />
            <circle cx="13" cy="12.500" r="6" fill="#ddd" stroke="#999" />
            <text x="13" y="16" fontSize="9" textAnchor="middle" fill="#222">1</text>
          </svg>
        </Tray>
      </Taskbar>
    </Screen>
  );
}
